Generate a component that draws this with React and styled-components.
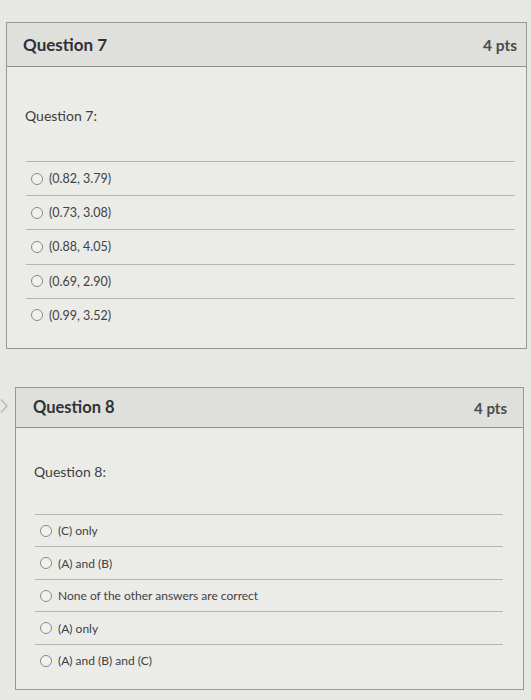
import React from 'react';
import styled, {createGlobalStyle} from 'styled-components';

const questions = [
    {
        id: 7,
        pts: 4,
        answers: ['(0.82, 3.79)', '(0.73, 3.08)', '(0.88, 4.05)', '(0.69, 2.90)', '(0.99, 3.52)'],
        layout: {left: 6, width: 521, headH: 43, title: 17, pts: 15.5, padL: 16, padR: 9, top: 39, gap: 35, rowH: 33.2, listL: 19, listR: 11, bottom: 16, answer: 12.5}
    },
    {
        id: 8,
        pts: 4,
        answers: ['(C) only', '(A) and (B)', 'None of the other answers are correct', '(A) only', '(A) and (B) and (C)'],
        layout: {left: 6, width: 509, headH: 39, title: 16.5, pts: 15, padL: 17, padR: 16, top: 34, gap: 32, rowH: 31.5, listL: 19, listR: 20, bottom: 13, answer: 12}
    }
];

const App = () => {
    return (
        <Page>
            <GlobalStyle/>
            {questions.map((q, i) => (
                <Row key={q.id} $first={i === 0}>
                    {i > 0 && (
                        <Chevron viewBox="0 0 9 16">
                            <path d="M1 1.5 L7 8 L1 14.5" fill="none" stroke="#b8b8b5" strokeWidth="1.4"/>
                        </Chevron>
                    )}
                    <Card $l={q.layout}>
                        <Header $l={q.layout}>
                            <Title $l={q.layout}>Question {q.id}</Title>
                            <Points $l={q.layout}>{q.pts} pts</Points>
                        </Header>
                        <Body $l={q.layout}>
                            <Prompt>Question {q.id}:</Prompt>
                            <Answers $l={q.layout}>
                                {q.answers.map((a) => (
                                    <Answer key={a} $l={q.layout}>
                                        <Radio/>
                                        <span>{a}</span>
                                    </Answer>
                                ))}
                            </Answers>
                        </Body>
                    </Card>
                </Row>
            ))}
        </Page>
    )
}

const GlobalStyle = createGlobalStyle`
  body {
    margin: 0;
    background: #e7e7e4;
    font-family: Lato, "Open Sans", sans-serif;
  }
`
const Page = styled.div`
  width: 531px;
  height: 700px;
  padding-top: 22px;
  box-sizing: border-box;
  overflow: hidden;
`
const Row = styled.div`
  display: flex;
  align-items: flex-start;
  margin-top: ${p => p.$first ? 0 : 38}px;
`
const Chevron = styled.svg`
  width: 9px;
  height: 16px;
  margin-top: 11px;
  flex-shrink: 0;
`
const Card = styled.div`
  margin-left: ${p => p.$l.left}px;
  width: ${p => p.$l.width}px;
  border: 1px solid #979794;
  background: #ebebe8;
  box-sizing: border-box;
`
const Header = styled.div`
  height: ${p => p.$l.headH}px;
  display: flex;
  align-items: center;
  justify-content: space-between;
  padding: 0 ${p => p.$l.padR}px 0 ${p => p.$l.padL}px;
  background: #dfdfdc;
  border-bottom: 1px solid #90908d;
`
const Title = styled.div`
  font-size: ${p => p.$l.title}px;
  font-weight: 700;
  color: #2e3236;
`
const Points = styled.div`
  font-size: ${p => p.$l.pts}px;
  font-weight: 700;
  color: #4a4c4e;
  margin-top: 1px;
`
const Body = styled.div`
  padding: ${p => p.$l.top}px ${p => p.$l.listR}px ${p => p.$l.bottom}px ${p => p.$l.listL - 2}px;
`
const Prompt = styled.div`
  font-size: 14px;
  line-height: 20px;
  color: #3c3e40;
  padding-left: 1px;
`
const Answers = styled.div`
  margin-top: ${p => p.$l.gap}px;
  margin-left: 2px;
`
const Answer = styled.div`
  height: ${p => p.$l.rowH}px;
  display: flex;
  align-items: center;
  gap: 6px;
  padding-left: 5px;
  border-top: 1px solid #b4b4b1;
  font-size: ${p => p.$l.answer}px;
  color: #404244;
`
const Radio = styled.span`
  width: 10px;
  height: 10px;
  border-radius: 50%;
  border: 1px solid #8a8a88;
  background: #f1f1ee;
  flex-shrink: 0;
`

export default App;
